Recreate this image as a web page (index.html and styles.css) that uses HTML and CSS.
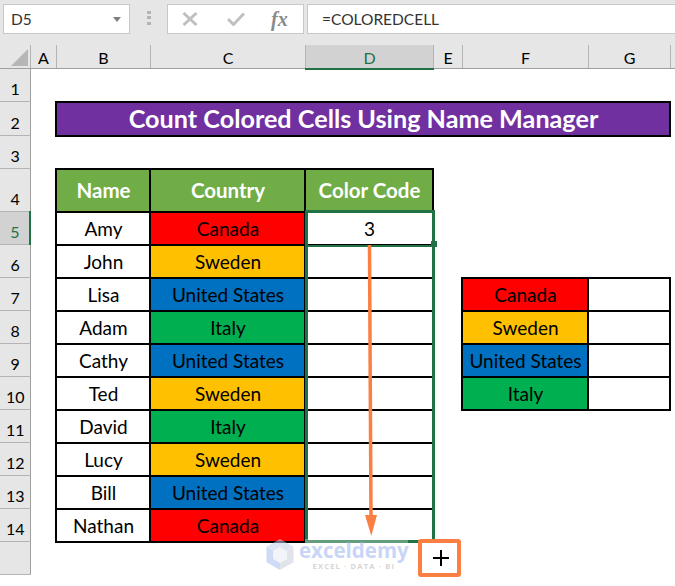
FILE: index.html
```html
<!DOCTYPE html>
<html lang="en">
<head>
<meta charset="utf-8">
<title>Count Colored Cells Using Name Manager</title>
<link rel="stylesheet" href="styles.css">
</head>
<body>
<div class="app">
  <div class="topbar">
    <div class="namebox"><span>D5</span><svg class="caret" width="8" height="5" viewBox="0 0 8 5"><path d="M0 0h8L4 5z"/></svg></div>
    <div class="grip"><i></i><i></i><i></i></div>
    <div class="fxbox">
      <svg class="ic" width="16" height="14" viewBox="0 0 16 14"><path d="M1.500 1l13 12M14.500 1l-13 12"/></svg>
      <svg class="ic" width="18" height="14" viewBox="0 0 18 14"><path d="M1 7l5.500 5.500L17 1.500"/></svg>
      <span class="fx">fx</span>
    </div>
    <div class="formula">=COLOREDCELL</div>
  </div>
  <div class="sheet">
    <table class="grid">
      <colgroup><col class="c0"><col class="ca"><col class="cb"><col class="cc"><col class="cd"><col class="ce"><col class="cf"><col class="cg"><col class="ch"></colgroup>
      <thead>
        <tr class="h-head"><th class="corner"><svg width="17" height="17" viewBox="0 0 17 17"><path d="M17 0v17H0z"/></svg></th><th>A</th><th>B</th><th>C</th><th class="sel-col">D</th><th>E</th><th>F</th><th>G</th><th></th></tr>
      </thead>
      <tbody>
        <tr class="r"><th>1</th><td></td><td></td><td></td><td></td><td></td><td></td><td></td><td></td></tr>
        <tr class="r"><th>2</th><td></td><td colspan="6" class="title">Count Colored Cells Using Name Manager</td><td></td></tr>
        <tr class="r"><th>3</th><td></td><td></td><td></td><td></td><td></td><td></td><td></td><td></td></tr>
        <tr class="r4"><th>4</th><td></td><td class="hd">Name</td><td class="hd">Country</td><td class="hd">Color Code</td><td></td><td></td><td></td><td></td></tr>
        <tr class="r"><th class="sel-row">5</th><td></td><td class="b">Amy</td><td class="b red">Canada</td><td class="b">3</td><td></td><td></td><td></td><td></td></tr>
        <tr class="r"><th>6</th><td></td><td class="b">John</td><td class="b yel">Sweden</td><td class="b"></td><td></td><td></td><td></td><td></td></tr>
        <tr class="r"><th>7</th><td></td><td class="b">Lisa</td><td class="b blu">United States</td><td class="b"></td><td></td><td class="b red">Canada</td><td class="b"></td><td></td></tr>
        <tr class="r"><th>8</th><td></td><td class="b">Adam</td><td class="b grn">Italy</td><td class="b"></td><td></td><td class="b yel">Sweden</td><td class="b"></td><td></td></tr>
        <tr class="r"><th>9</th><td></td><td class="b">Cathy</td><td class="b blu">United States</td><td class="b"></td><td></td><td class="b blu">United States</td><td class="b"></td><td></td></tr>
        <tr class="r"><th>10</th><td></td><td class="b">Ted</td><td class="b yel">Sweden</td><td class="b"></td><td></td><td class="b grn">Italy</td><td class="b"></td><td></td></tr>
        <tr class="r"><th>11</th><td></td><td class="b">David</td><td class="b grn">Italy</td><td class="b"></td><td></td><td></td><td></td><td></td></tr>
        <tr class="r"><th>12</th><td></td><td class="b">Lucy</td><td class="b yel">Sweden</td><td class="b"></td><td></td><td></td><td></td><td></td></tr>
        <tr class="r"><th>13</th><td></td><td class="b">Bill</td><td class="b blu">United States</td><td class="b"></td><td></td><td></td><td></td><td></td></tr>
        <tr class="r"><th>14</th><td></td><td class="b">Nathan</td><td class="b red">Canada</td><td class="b"></td><td></td><td></td><td></td><td></td></tr>
        <tr class="r"><th></th><td></td><td></td><td></td><td></td><td></td><td></td><td></td><td></td></tr>
      </tbody>
    </table>
    <div class="selection"><div class="active"></div></div>
    <div class="handle"></div>
    <svg class="arrow" width="16" height="294" viewBox="0 0 16 294"><path class="shaft" d="M5.500 0L7 272"/><path class="head" d="M1 270h12L7.300 291z"/></svg>
    <div class="wash"></div>
    <div class="mark">
      <svg width="28" height="31" viewBox="0 0 28 31"><path class="m1" d="M14 0l13.500 7.800L14 15.500.500 7.800z"/><path class="m2" d="M.500 7.800L14 15.500V31L.500 23.200z"/><path class="m3" d="M27.500 7.800L14 15.500V31l13.500-7.800z"/><path class="m4" d="M14 8l7 4v8l-7 4-7-4v-8z"/></svg>
      <div class="mark-text"><div class="mark-name">exceldemy</div><div class="mark-sub">EXCEL · DATA · BI</div></div>
    </div>
    <div class="plus-box"><svg width="16" height="16" viewBox="0 0 16 16"><path d="M0 8h16M8 0v16"/></svg></div>
  </div>
</div>
</body>
</html>
```
FILE: styles.css
```css
html, body { margin: 0; padding: 0; height: 100%; overflow: hidden; background: #fff; }
.app { width: 675px; height: 586px; overflow: hidden; font-family: "Lato", "Liberation Sans", sans-serif; color: #000; }

.topbar { height: 45px; box-sizing: border-box; background: #e6e6e6; display: flex; align-items: flex-start; padding-top: 4px; padding-left: 3px; }
.namebox { width: 127px; height: 30px; box-sizing: border-box; background: #fff; border: 1px solid #c8c8c8; display: flex; align-items: center; justify-content: space-between; padding: 0 8px 0 7px; font-size: 15.500px; color: #333; }
.caret path { fill: #7f7f7f; }
.grip { width: 37px; height: 30px; display: flex; flex-direction: column; align-items: center; justify-content: center; gap: 2.500px; padding-bottom: 3px; box-sizing: border-box; }
.grip i { display: block; width: 4px; height: 3px; background: #b4b4b4; }
.fxbox { width: 137px; height: 30px; box-sizing: border-box; background: #fff; border: 1px solid #c8c8c8; display: flex; align-items: center; padding-left: 14px; gap: 29px; }
.ic path { fill: none; stroke: #c0c0c0; stroke-width: 3; }
.fx { font-family: "Liberation Serif", serif; font-style: italic; font-weight: bold; font-size: 20px; color: #8a8a8a; margin-left: -3px; }
.formula { flex: 1; height: 30px; box-sizing: border-box; margin-left: 3px; background: #fff; border: 1px solid #c8c8c8; border-right: 0; display: flex; align-items: center; padding-left: 14px; font-size: 15.500px; color: #333; }

.sheet { position: relative; height: 541px; }
.grid { border-collapse: collapse; table-layout: fixed; width: 675px; }
.c0 { width: 30px; } .ca { width: 26px; } .cb { width: 94px; } .cc { width: 155px; } .cd { width: 128px; } .ce { width: 29px; } .cf { width: 126px; } .cg { width: 82px; } .ch { width: 5px; }

.grid th, .grid td { padding: 0 0 0 1px; font-weight: normal; font-size: 19px; text-align: center; overflow: hidden; white-space: nowrap; }
.grid thead th { height: 22.500px; background: #e6e6e6; border-right: 1px solid #b4b4b4; border-bottom: 1px solid #9f9f9f; font-size: 16px; vertical-align: bottom; line-height: 20px; }
.grid thead th:last-child { border-right: 0; }
.grid thead .corner { padding: 0; }
.corner svg { display: block; margin: 4px 0 2px 11px; }
.corner path { fill: #b6b6b6; }
.grid thead th.sel-col { background: #d2d2d2; color: #217346; border-bottom: 2px solid #217346; }
.grid tbody th { background: #e6e6e6; border-right: 1px solid #9f9f9f; border-bottom: 1px solid #b4b4b4; font-size: 16px; vertical-align: bottom; line-height: 24px; }
.grid tbody th.sel-row { background: #d2d2d2; color: #217346; border-right: 2px solid #217346; }
.r { height: 33px; }
.r4 { height: 43px; }

.b, .hd, .title { border: 2px solid #000; }
.grid .title { background: #7030a0; color: #fff; font-weight: bold; font-size: 25.200px; padding-bottom: 2px; }
.grid .hd { background: #70ad47; color: #fff; font-weight: bold; font-size: 20.500px; }
.red { background: #f00; }
.yel { background: #ffc000; }
.blu { background: #0070c0; }
.grn { background: #00b050; }

.selection { position: absolute; left: 305px; top: 165px; width: 130px; height: 332.500px; box-sizing: border-box; border: 3px solid #217346; }
.active { height: 32px; border-bottom: 2px solid #217346; }
.handle { position: absolute; left: 431px; top: 196px; width: 6px; height: 6px; background: #217346; }
.arrow { position: absolute; left: 364px; top: 200px; }
.shaft { fill: none; stroke: #fb7f43; stroke-width: 3.500; }
.head { fill: #fb7f43; }

.wash { position: absolute; left: 305px; top: 494px; width: 103px; height: 4px; background: rgba(255, 255, 255, .3); }
.mark { position: absolute; left: 266px; top: 494px; display: flex; gap: 5px; opacity: .55; }
.m1 { fill: #c3d0ee; } .m2 { fill: #a9bdf0; } .m3 { fill: #c9cfd9; } .m4 { fill: #e8ecf6; }
.mark-text { display: flex; flex-direction: column; align-items: center; }
.mark-name { font-family: "Open Sans", sans-serif; font-weight: bold; font-size: 20.500px; line-height: 23px; color: #9db4f0; }
.mark-sub { font-family: "Open Sans", sans-serif; font-weight: bold; font-size: 7.500px; line-height: 8px; letter-spacing: 1.200px; color: #b3b3b3; }

.plus-box { position: absolute; left: 418px; top: 494px; width: 43px; height: 38px; box-sizing: border-box; border: 4px solid #fb7f43; border-radius: 3px; background: #fff; display: flex; align-items: center; justify-content: center; padding-left: 2px; }
.plus-box path { fill: none; stroke: #000; stroke-width: 2; }
```
